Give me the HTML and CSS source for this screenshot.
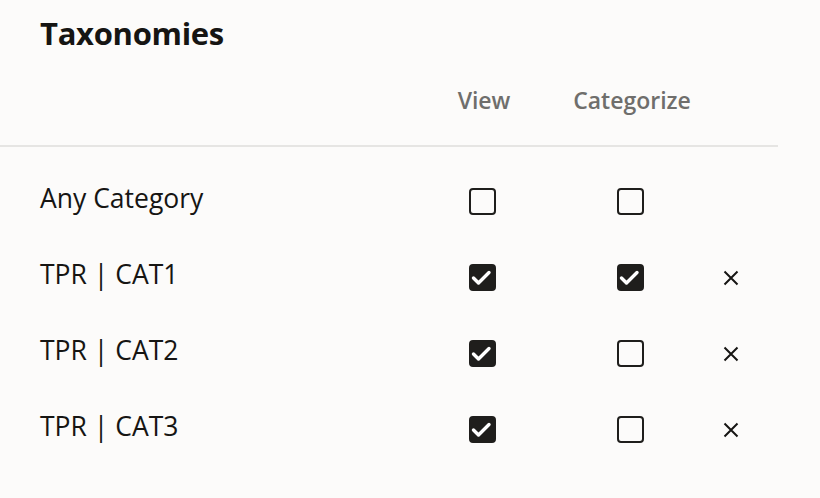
FILE: index.html
```html
<!DOCTYPE html>
<html>
<head>
<meta charset="utf-8">
<link rel="stylesheet" href="styles.css">
</head>
<body>
<div class="page">
  <h1 class="title">Taxonomies</h1>
  <div class="row head">
    <div class="label"></div>
    <div class="cell view">View</div>
    <div class="cell cat">Categorize</div>
    <div class="cell rm"></div>
  </div>
  <div class="rows">
    <div class="row item">
      <div class="label">Any Category</div>
      <div class="cell view"><span class="cb"></span></div>
      <div class="cell cat"><span class="cb"></span></div>
      <div class="cell rm"></div>
    </div>
    <div class="row item">
      <div class="label">TPR | CAT1</div>
      <div class="cell view"><span class="cb on"><svg viewBox="0 0 27 27"><path d="M5.5 14l5 5 10.5-10.5" /></svg></span></div>
      <div class="cell cat"><span class="cb on"><svg viewBox="0 0 27 27"><path d="M5.5 14l5 5 10.5-10.5" /></svg></span></div>
      <div class="cell rm"><svg class="x" viewBox="0 0 16 16"><path d="M1.5 1.5l13 13M14.5 1.5l-13 13"/></svg></div>
    </div>
    <div class="row item">
      <div class="label">TPR | CAT2</div>
      <div class="cell view"><span class="cb on"><svg viewBox="0 0 27 27"><path d="M5.5 14l5 5 10.5-10.5" /></svg></span></div>
      <div class="cell cat"><span class="cb"></span></div>
      <div class="cell rm"><svg class="x" viewBox="0 0 16 16"><path d="M1.5 1.5l13 13M14.5 1.5l-13 13"/></svg></div>
    </div>
    <div class="row item">
      <div class="label">TPR | CAT3</div>
      <div class="cell view"><span class="cb on"><svg viewBox="0 0 27 27"><path d="M5.5 14l5 5 10.5-10.5" /></svg></span></div>
      <div class="cell cat"><span class="cb"></span></div>
      <div class="cell rm"><svg class="x" viewBox="0 0 16 16"><path d="M1.5 1.5l13 13M14.5 1.5l-13 13"/></svg></div>
    </div>
  </div>
</div>
</body>
</html>
```
FILE: styles.css
```css
html, body {
  margin: 0;
  padding: 0;
  background: #fcfbfa;
}
body {
  font-family: "Open Sans", "Noto Sans", sans-serif;
  color: #161513;
  width: 820px;
  height: 498px;
  overflow: hidden;
}
.title {
  margin: 0;
  padding: 12px 0 0 40px;
  font-size: 31px;
  font-weight: 700;
  line-height: 42px;
  letter-spacing: -0.3px;
}
.row {
  display: flex;
  align-items: center;
  padding-left: 40px;
}
.label {
  width: 384px;
  font-size: 26.5px;
  line-height: 34px;
}
.cell {
  display: flex;
  justify-content: center;
  align-items: center;
}
.view { width: 116px; }
.cat { width: 180px; }
.rm { width: 22px; }
.head {
  width: 778px;
  height: 93px;
  border-bottom: 2px solid #e6e5e3;
  box-sizing: border-box;
  padding-top: 0;
}
.head .cell {
  font-size: 23px;
  font-weight: 600;
  color: #6f6e6c;
}
.head .view { padding-left: 4px; box-sizing: border-box; }
.head .cat { padding-left: 4px; box-sizing: border-box; }
.rows {
  padding-top: 34px;
  display: flex;
  flex-direction: column;
  gap: 42px;
}
.item { height: 34px; }
.cb {
  width: 27px;
  height: 27px;
  box-sizing: border-box;
  border: 2.5px solid #1f1e1c;
  border-radius: 4px;
  display: block;
  margin-top: 7px;
}
.cb.on {
  background: #1f1e1c;
}
.cb svg {
  display: block;
  width: 27px;
  height: 27px;
  margin: -2.5px;
}
.cb path {
  fill: none;
  stroke: #fff;
  stroke-width: 3.4;
  stroke-linecap: round;
  stroke-linejoin: round;
}
.x {
  width: 16px;
  height: 16px;
  display: block;
  margin-top: 7px;
}
.x path {
  stroke: #161513;
  stroke-width: 2;
  fill: none;
}
```
